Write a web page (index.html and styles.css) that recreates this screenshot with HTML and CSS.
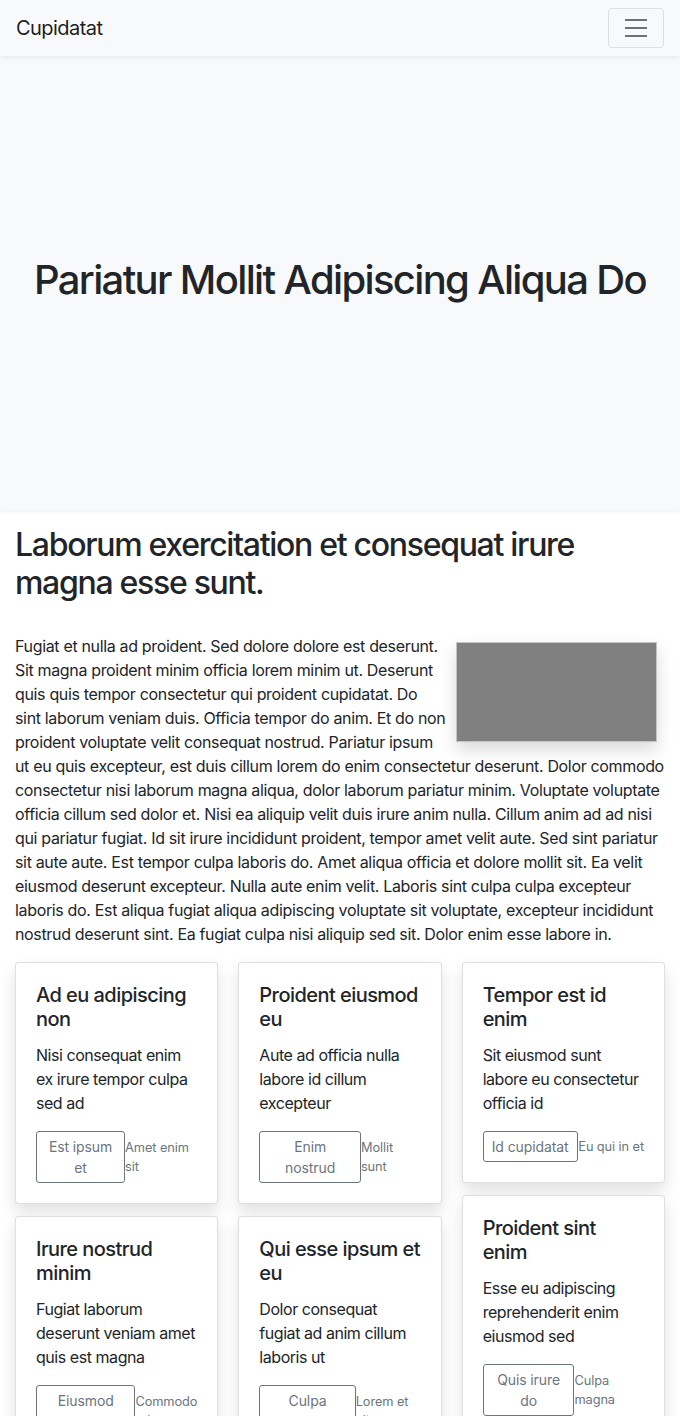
FILE: index.html
```html
<!DOCTYPE html>
<html lang="en">
<head>
<meta charset="utf-8">
<title>Cupidatat</title>
<link rel="stylesheet" href="styles.css">
</head>
<body>
<nav class="navbar">
  <a class="brand" href="#">Cupidatat</a>
  <button class="toggler" type="button" aria-label="Toggle navigation">
    <svg class="toggler-icon" viewBox="0 0 30 30" width="30" height="30"><path stroke="rgba(0,0,0,0.55)" stroke-linecap="butt" stroke-miterlimit="10" stroke-width="2" d="M4 7h22M4 15h22M4 23h22"/></svg>
  </button>
</nav>
<header class="hero">
  <h1 class="hero-title">Pariatur Mollit Adipiscing Aliqua Do</h1>
</header>
<main class="container">
  <h2 class="section-title">Laborum exercitation et consequat irure magna esse sunt.</h2>
  <div class="thumb"></div>
  <p class="lead-text">Fugiat et nulla ad proident. Sed dolore dolore est deserunt. Sit magna proident minim officia lorem minim ut. Deserunt quis quis tempor consectetur qui proident cupidatat. Do sint laborum veniam duis. Officia tempor do anim. Et do non proident voluptate velit consequat nostrud. Pariatur ipsum ut eu quis excepteur, est duis cillum lorem do enim consectetur deserunt. Dolor commodo consectetur nisi laborum magna aliqua, dolor laborum pariatur minim. Voluptate voluptate officia cillum sed dolor et. Nisi ea aliquip velit duis irure anim nulla. Cillum anim ad ad nisi qui pariatur fugiat. Id sit irure incididunt proident, tempor amet velit aute. Sed sint pariatur sit aute aute. Est tempor culpa laboris do. Amet aliqua officia et dolore mollit sit. Ea velit eiusmod deserunt excepteur. Nulla aute enim velit. Laboris sint culpa culpa excepteur laboris do. Est aliqua fugiat aliqua adipiscing voluptate sit voluptate, excepteur incididunt nostrud deserunt sint. Ea fugiat culpa nisi aliquip sed sit. Dolor enim esse labore in.</p>

  <div class="card-columns">
    <div class="col">
      <div class="card">
        <h5 class="card-title">Ad eu adipiscing non</h5>
        <p class="card-text">Nisi consequat enim ex irure tempor culpa sed ad</p>
        <div class="card-foot">
          <button class="btn" type="button">Est ipsum et</button>
          <small class="muted">Amet enim sit</small>
        </div>
      </div>
      <div class="card">
        <h5 class="card-title">Irure nostrud minim</h5>
        <p class="card-text">Fugiat laborum deserunt veniam amet quis est magna</p>
        <div class="card-foot">
          <button class="btn" type="button">Eiusmod excepteur</button>
          <small class="muted">Commodo ad</small>
        </div>
      </div>
    </div>
    <div class="col">
      <div class="card">
        <h5 class="card-title">Proident eiusmod eu</h5>
        <p class="card-text">Aute ad officia nulla labore id cillum excepteur</p>
        <div class="card-foot">
          <button class="btn" type="button">Enim nostrud</button>
          <small class="muted">Mollit sunt</small>
        </div>
      </div>
      <div class="card">
        <h5 class="card-title">Qui esse ipsum et eu</h5>
        <p class="card-text">Dolor consequat fugiat ad anim cillum laboris ut</p>
        <div class="card-foot">
          <button class="btn" type="button">Culpa consequat</button>
          <small class="muted">Lorem et aliqua</small>
        </div>
      </div>
    </div>
    <div class="col">
      <div class="card">
        <h5 class="card-title">Tempor est id enim</h5>
        <p class="card-text">Sit eiusmod sunt labore eu consectetur officia id</p>
        <div class="card-foot">
          <button class="btn" type="button">Id cupidatat</button>
          <small class="muted">Eu qui in et</small>
        </div>
      </div>
      <div class="card">
        <h5 class="card-title">Proident sint enim</h5>
        <p class="card-text">Esse eu adipiscing reprehenderit enim eiusmod sed</p>
        <div class="card-foot">
          <button class="btn" type="button">Quis irure do</button>
          <small class="muted">Culpa magna</small>
        </div>
      </div>
    </div>
  </div>
</main>
</body>
</html>
```
FILE: styles.css
```css
* { box-sizing: border-box; }
html, body { margin: 0; padding: 0; }
body {
  font-family: Inter, "Liberation Sans", Arial, sans-serif;
  font-size: 16px;
  line-height: 1.5;
  letter-spacing: -0.34px;
  color: #212529;
  background: #fff;
}
.navbar {
  position: relative;
  z-index: 2;
  height: 56px;
  padding: 8px 16px;
  display: flex;
  align-items: center;
  justify-content: space-between;
  background: #f8f9fa;
  box-shadow: 0 2px 4px rgba(0,0,0,0.06);
}
.brand {
  font-size: 20px;
  line-height: 30px;
  letter-spacing: -0.55px;
  color: rgba(0,0,0,0.9);
  text-decoration: none;
}
.toggler {
  width: 56px;
  height: 40px;
  padding: 4px 12px;
  background: transparent;
  border: 1px solid rgba(0,0,0,0.1);
  border-radius: 4px;
  display: flex;
  align-items: center;
  justify-content: center;
}
.toggler-icon { display: block; }
.hero {
  height: 454px;
  background: #f8f9fa;
  display: flex;
  align-items: center;
  justify-content: center;
  box-shadow: 0 2px 4px rgba(0,0,0,0.06);
}
.hero-title {
  margin: 0 0 6px;
  font-size: 40px;
  font-weight: 500;
  line-height: 1.2;
  letter-spacing: -1.65px;
  text-align: center;
}
.container {
  padding: 0 15px;
}
.section-title {
  margin: 16px 0 31px;
  font-size: 32px;
  font-weight: 500;
  line-height: 1.2;
  letter-spacing: -1.3px;
}
.thumb {
  float: right;
  width: 201px;
  height: 100px;
  margin: 8px 8px 8px 10px;
  background: #808080;
  border: 1px solid #c4c4c4;
  box-shadow: 0 8px 16px rgba(0,0,0,0.15);
}
.lead-text {
  margin: 0 0 16px;
}
.card-columns {
  clear: both;
  display: grid;
  grid-template-columns: repeat(3, 1fr);
  column-gap: 20px;
  align-items: start;
}
.col {
  display: flex;
  flex-direction: column;
  gap: 12px;
}
.card {
  background: #fff;
  border: 1px solid rgba(0,0,0,0.125);
  border-radius: 4px;
  padding: 20px;
  box-shadow: 0 8px 16px rgba(0,0,0,0.12);
}
.card-title {
  margin: 0 0 12px;
  font-size: 20px;
  font-weight: 500;
  line-height: 1.2;
  letter-spacing: -0.55px;
}
.card-text {
  margin: 0 0 16px;
  letter-spacing: -0.45px;
}
.card-foot {
  display: flex;
  align-items: center;
  justify-content: space-between;
}
.btn {
  font-family: inherit;
  font-size: 14px;
  line-height: 1.5;
  letter-spacing: -0.1px;
  padding: 4px 8px;
  color: #6c757d;
  background: transparent;
  border: 1px solid #6c757d;
  border-radius: 3px;
  text-align: center;
}
.muted {
  font-size: 12.8px;
  line-height: 1.5;
  letter-spacing: -0.1px;
  color: #6c757d;
}
```
